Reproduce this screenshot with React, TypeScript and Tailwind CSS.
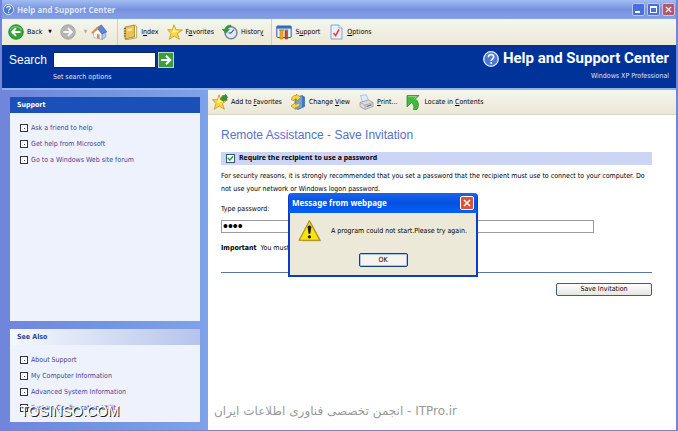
import { useState } from 'react'
import type { ReactNode } from 'react'

const supportLinks = ['Ask a friend to help', 'Get help from Microsoft', 'Go to a Windows Web site forum']
const seeAlsoLinks = ['About Support', 'My Computer Information', 'Advanced System Information', 'System Configuration Utility']

function HelpIcon({ className }: { className: string }) {
  return (
    <svg viewBox="0 0 16 16" className={className} aria-hidden="true">
      <circle cx="8" cy="8" r="7.3" fill="#4a78d6" stroke="#e8effd" strokeWidth="1.3" />
      <path d="M5.4 6.2C5.4 4.4 6.5 3.5 8.1 3.5s2.6.9 2.6 2.4c0 1.9-2.5 2-2.5 4" fill="none" stroke="#fff" strokeWidth="1.6" />
      <circle cx="8.2" cy="12" r="1" fill="#fff" />
    </svg>
  )
}

function BackIcon() {
  return (
    <svg viewBox="0 0 16 16" className="size-4" aria-hidden="true">
      <circle cx="8" cy="8" r="7.3" fill="#35a23a" stroke="#1f7f28" strokeWidth=".8" />
      <path d="M2.5 6C4 2 11 1 13.5 6" fill="none" stroke="#8fd68c" strokeWidth="1.4" opacity=".7" />
      <path d="M12.5 8H4.5M8 4.2L4.2 8L8 11.8" fill="none" stroke="#fff" strokeWidth="1.9" />
    </svg>
  )
}

function ForwardIcon() {
  return (
    <svg viewBox="0 0 16 16" className="size-4" aria-hidden="true">
      <circle cx="8" cy="8" r="7.2" fill="#b5b5b7" stroke="#9a9a9c" strokeWidth=".8" />
      <path d="M3.5 8h8M8 4.2L11.8 8L8 11.8" fill="none" stroke="#f4f4f4" strokeWidth="1.9" />
    </svg>
  )
}

function HomeIcon() {
  return (
    <svg viewBox="0 0 16 16" className="size-4" aria-hidden="true">
      <path d="M2 8.500L6.500 5l4.500 4.500V15.500L3 13.500z" fill="#fafbfe" stroke="#8b97b5" strokeWidth=".6" />
      <path d="M11 9.500L14.8 8V13L11 15.5z" fill="#b5c9ec" stroke="#7388b5" strokeWidth=".6" />
      <path d="M10.500 1L15.800 7.800L11 10L6 3.800z" fill="#5b87d6" stroke="#3962ae" strokeWidth=".6" />
      <path d="M10.500 1L6 3.200L.5 8.600L2 9.400L6.500 5.200L7 4z" fill="#eb9439" stroke="#c36c1e" strokeWidth=".4" />
      <path d="M6 10l2.600.6v4.200L6 14.100z" fill="#d98a3f" />
    </svg>
  )
}

function IndexIcon() {
  return (
    <svg viewBox="0 0 16 16" className="size-4" aria-hidden="true">
      <path d="M3 3L12.5 1v12L3 15z" fill="#e9c354" stroke="#9b7622" strokeWidth=".7" />
      <path d="M12.5 1L14.6 2.4v11.4L5 15.6L3 15l9.5-2z" fill="#fff6cc" stroke="#9b7622" strokeWidth=".6" />
      <path d="M5.5 5l4.5-1v2.6l-4.5 1z" fill="#f8e49b" />
      <path d="M1.8 4.5H4M1.8 7H4M1.8 9.5H4M1.8 12H4" stroke="#67553a" strokeWidth=".9" />
    </svg>
  )
}

function StarIcon({ plus }: { plus?: boolean }) {
  return (
    <svg viewBox="0 0 16 16" className="size-4" aria-hidden="true">
      <path d="M7 .8l2 5 6.4.2-5 3.6 2 5.7L7.3 12 2.2 15.3 4 9.6.6 5.7l4.8.1z" fill="#fcd83c" stroke="#c9941a" strokeWidth=".8" />
      <path d="M7 3l1.2 3.6 3.8.4-3.6 1.3L5 9l.8-2.2z" fill="#fff29a" />
      {plus && <path d="M10.5 1.5h2c.2-1.4 2.2-1.2 2 .3l1.2 1.4-.9 1.3c.6 1.3-.8 2.3-1.9 1.5L11.3 7.5 10 6c-1.6.2-2-1.6-.6-2.2z" fill="#35903a" stroke="#21692b" strokeWidth=".5" />}
    </svg>
  )
}

function HistoryIcon() {
  return (
    <svg viewBox="0 0 16 16" className="size-4" aria-hidden="true">
      <circle cx="9" cy="8.8" r="6" fill="#dfeaf5" stroke="#74869b" strokeWidth="1.5" />
      <path d="M9 9l3-3.5M9 9H6.5" stroke="#2a4c7c" strokeWidth="1.1" />
      <path d="M9 1.2C5.6.8 3.3 2.6 3 5.2H.3L4 9.3l3.4-4.1H5.3C5.6 3.4 7 2.4 9 2.6z" fill="#2e9e38" stroke="#1b7427" strokeWidth=".5" />
    </svg>
  )
}

function SupportIcon() {
  return (
    <svg viewBox="0 0 16 16" className="size-4" aria-hidden="true">
      <rect x=".8" y="2" width="14.4" height="11.5" rx="1" fill="#e9f1fc" stroke="#2f5fa8" />
      <path d="M.8 2h14.4v2.6H.8z" fill="#3569bb" />
      <path d="M4 6.5h3V15H4z" fill="#edae28" stroke="#9a6c15" strokeWidth=".5" />
      <path d="M9 6.5h2.6V15H9z" fill="#cf4334" stroke="#8d2820" strokeWidth=".5" />
      <path d="M3 6h5M8.4 6h4" stroke="#9c7a32" strokeWidth="1" />
    </svg>
  )
}

function OptionsIcon() {
  return (
    <svg viewBox="0 0 16 16" className="size-4" aria-hidden="true">
      <path d="M3 1h8l3 3v11H3z" fill="#e9f0fb" stroke="#7f9ac9" strokeWidth=".9" />
      <path d="M11 1v3h3" fill="#fff" stroke="#7f9ac9" strokeWidth=".7" />
      <path d="M5.5 9l2.2 2.6L11 5.5" fill="none" stroke="#d64b38" strokeWidth="1.6" />
    </svg>
  )
}

function ChangeViewIcon() {
  return (
    <svg viewBox="0 0 16 16" className="size-4" aria-hidden="true">
      <path d="M5 4l7-2.5 2.5 1.5v9.5L8 15.5 5 14z" fill="#6aa3e2" stroke="#2f62a8" strokeWidth=".7" />
      <path d="M12 1.5l2.5 1.5v9.5L12 13.5z" fill="#3f78c4" />
      <path d="M1.5 6C1.500 2.500 4 1 6.500 1.400V0L11 3.500 6.500 7V5C5 4.800 4.300 5.300 4 6.500z" fill="#fcd440" stroke="#a97d14" strokeWidth=".6" />
      <path d="M10 9.500c-.2 2.700-2 4-4.500 3.900V15.500L1 12 5.500 8.500v1.900c1 0 1.800-.3 2.200-1.200z" fill="#fcd440" stroke="#a97d14" strokeWidth=".6" />
    </svg>
  )
}

function PrintIcon() {
  return (
    <svg viewBox="0 0 16 16" className="size-4" aria-hidden="true">
      <path d="M2.5 1.5L8.5.8 10.5 7 4.5 8.5z" fill="#dceafd" stroke="#92a9cb" strokeWidth=".6" />
      <path d="M2 8.5L10.5 6l4.5 2.5v4L7 15.4 2 12.5z" fill="#dcdcdc" stroke="#8e8e90" strokeWidth=".7" />
      <path d="M2 8.5l5 2.6 8-2.6M7 11v4.3" fill="none" stroke="#9a9a9c" strokeWidth=".7" />
      <path d="M8.5 12.5l5-1.7" stroke="#5d6470" strokeWidth="1.2" />
    </svg>
  )
}

function LocateIcon() {
  return (
    <svg viewBox="0 0 16 16" className="size-4" aria-hidden="true">
      <path d="M2 1.5h12L10.500 5C13.500 7.500 14.500 11.500 12 15.500H8.500C9.500 12.500 8.500 10 6.500 8.500L2 13z" fill="#46b840" stroke="#248228" strokeWidth=".7" />
      <path d="M3 2.600h8.500L9 5.200" fill="none" stroke="#9be08c" strokeWidth=".8" />
    </svg>
  )
}

function WarningIcon() {
  return (
    <svg viewBox="0 0 22 22" className="size-6 shrink-0" aria-hidden="true">
      <path d="M12 3.5L21.5 20.5H4z" fill="#8b8874" opacity=".6" />
      <path d="M10.5 1.5L20 19.5H1z" fill="#fbe30f" stroke="#a98c0a" strokeWidth="1" strokeLinejoin="round" />
      <path d="M8.8 7.5c0-2 3.4-2 3.4 0L11.3 13.5H9.7z" fill="#1c1c1c" />
      <circle cx="10.5" cy="16.3" r="1.5" fill="#1c1c1c" />
    </svg>
  )
}

function ToolButton({ icon, className = '', children }: { icon: ReactNode; className?: string; children?: ReactNode }) {
  return (
    <button className={`flex items-center gap-[3px] whitespace-nowrap ${className}`}>
      {icon}
      {children && <span>{children}</span>}
    </button>
  )
}

function LinkList({ links }: { links: string[] }) {
  return (
    <ul className="px-2.5 pt-[7px]">
      {links.map(l => (
        <li key={l} className="h-4 leading-4">
          <a href="#" className="flex items-center gap-[3px] whitespace-nowrap text-[#4a4391]">
            <span className="flex size-2 shrink-0 items-center justify-center border border-[#303048] bg-white">
              <span className="size-px bg-[#303048]" />
            </span>
            {l}
          </a>
        </li>
      ))}
    </ul>
  )
}

export default function App() {
  const [required, setRequired] = useState(true)
  const [password, setPassword] = useState('pass')
  const [search, setSearch] = useState('')
  const [open, setOpen] = useState(true)

  return (
    <div className="relative flex min-h-screen flex-col border-x-2 border-b border-[#6f86dc] bg-white font-['DejaVu_Sans_Condensed','Noto_Sans',sans-serif] text-[7px] text-black">
      {/* Title bar */}
      <header className="flex h-[19px] items-center gap-[3px] bg-linear-to-b from-[#a3bdf2] via-[#7791e0] to-[#86a1e6] px-px">
        <HelpIcon className="size-[11px]" />
        <h1 className="flex-1 font-['Noto_Sans',sans-serif] text-[8px] font-bold text-[#dde6fa]">Help and Support Center</h1>
        <div className="flex gap-[2px]">
          <button aria-label="Minimize" className="flex size-[13px] items-end rounded-xs border border-[#b8c8f4] bg-[#4a6fdc] p-[2px]">
            <span className="h-[2px] w-[5px] bg-white" />
          </button>
          <button aria-label="Maximize" className="size-[13px] rounded-xs border border-[#b8c8f4] bg-[#4a6fdc] p-[2px]">
            <span className="block size-full border border-t-2 border-white" />
          </button>
          <button aria-label="Close" className="size-[13px] rounded-xs border border-[#d9c0d8] bg-[#b4586e] p-[2px]">
            <svg viewBox="0 0 8 8" className="size-full"><path d="M1 1l6 6M7 1L1 7" stroke="#fff" strokeWidth="1.5" /></svg>
          </button>
        </div>
      </header>

      {/* Navigation toolbar */}
      <nav className="flex h-[26px] items-center bg-linear-to-b from-[#f6f5ee] to-[#ebe8d7] px-1.5">
        <ToolButton icon={<BackIcon />}>Back</ToolButton>
        <span className="ml-1.5 text-[5px]">▼</span>
        <ToolButton icon={<ForwardIcon />} className="ml-2" />
        <span className="ml-2 text-[5px] text-[#aaa]">▼</span>
        <ToolButton icon={<HomeIcon />} className="ml-1" />
        <span className="ml-2.5 h-full border-l border-[#d0cdbd]" />
        <ToolButton icon={<IndexIcon />} className="ml-1">I<u>n</u>dex</ToolButton>
        <ToolButton icon={<StarIcon />} className="ml-2">F<u>a</u>vorites</ToolButton>
        <ToolButton icon={<HistoryIcon />} className="ml-2">Histor<u>y</u></ToolButton>
        <span className="ml-2 h-full border-l border-[#d0cdbd]" />
        <ToolButton icon={<SupportIcon />} className="ml-1">S<u>u</u>pport</ToolButton>
        <ToolButton icon={<OptionsIcon />} className="ml-2"><u>O</u>ptions</ToolButton>
      </nav>

      {/* Search banner */}
      <div className="flex h-[43px] justify-between bg-[#003399] px-[7px] text-white">
        <form className="flex gap-1.5 pt-[7px]" onSubmit={e => e.preventDefault()}>
          <label htmlFor="search" className="font-['Liberation_Sans',sans-serif] text-[12px] leading-[17px]">Search</label>
          <div>
            <div className="flex items-center gap-[2px]">
              <input id="search" value={search} onChange={e => setSearch(e.target.value)} className="h-4 w-[103px] border border-[#12245c] bg-white px-1 text-black" />
              <button aria-label="Go" className="size-4 border border-[#b9dcb5] bg-[#3c9d40]">
                <svg viewBox="0 0 14 14" className="size-full"><path d="M2 7h9M7 2.8L11.2 7L7 11.2" fill="none" stroke="#fff" strokeWidth="2" /></svg>
              </button>
            </div>
            <a href="#" className="block pt-[2px] leading-[14px] text-[#dfe6f7]">Set search options</a>
          </div>
        </form>
        <div className="pt-1 text-right">
          <div className="flex items-center gap-1 font-['Roboto','Liberation_Sans',sans-serif] text-[15px] leading-[19px] font-bold">
            <HelpIcon className="size-4" />
            Help and Support Center
          </div>
          <p className="leading-4 text-[#dfe6f7]">Windows XP Professional</p>
        </div>
      </div>

      <div className="flex flex-1 border-t-2 border-[#8fb0ee]">
        {/* Sidebar */}
        <aside className="flex w-[206px] shrink-0 flex-col gap-2 bg-linear-to-r from-[#7085dc] via-[#7395e0] to-[#7fa3ea] px-2 pt-[7px] pb-2">
          <section className="flex-1 bg-[#eef2fd]">
            <h2 className="h-4 bg-[#1c50b9] px-[7px] leading-4 font-bold text-white">Support</h2>
            <LinkList links={supportLinks} />
          </section>
          <section className="h-[93px] bg-[#eef2fd]">
            <h2 className="h-4 bg-linear-to-r from-[#f6f8fe] to-[#b5c4ea] px-[7px] leading-4 font-bold text-[#1f4a94]">See Also</h2>
            <LinkList links={seeAlsoLinks} />
          </section>
        </aside>

        <main className="min-w-0 flex-1">
          <div className="flex h-[25px] items-center border-b border-[#d8d5c4] bg-linear-to-b from-[#f6f5ee] to-[#ebe8d7] px-1">
            <ToolButton icon={<StarIcon plus />}>Add to <u>F</u>avorites</ToolButton>
            <ToolButton icon={<ChangeViewIcon />} className="ml-2">Change <u>V</u>iew</ToolButton>
            <ToolButton icon={<PrintIcon />} className="ml-2"><u>P</u>rint...</ToolButton>
            <ToolButton icon={<LocateIcon />} className="ml-2">Locate in <u>C</u>ontents</ToolButton>
          </div>

          <div className="pt-3 pr-6 pl-[13px]">
            <h2 className="font-['Liberation_Sans',sans-serif] text-[12px] leading-4 text-[#5672c4]">Remote Assistance - Save Invitation</h2>
            <label className="mt-[9px] flex h-[13px] items-center gap-1 bg-[#ccd5f5] px-[5px] font-['Noto_Sans',sans-serif] font-bold">
              <input type="checkbox" checked={required} onChange={e => setRequired(e.target.checked)} className="peer sr-only" />
              <span className="flex size-[9px] border border-[#33557f] bg-white text-transparent peer-checked:text-[#21a121]">
                <svg viewBox="0 0 8 8" className="size-full"><path d="M1 3.5L3.2 6L7 1.5" fill="none" stroke="currentColor" strokeWidth="1.6" /></svg>
              </span>
              Require the recipient to use a password
            </label>
            <p className="mt-[5px] leading-[13px]">
              For security reasons, it is strongly recommended that you set a password that the recipient must use to connect to your computer. Do not use your network or Windows logon password.
            </p>
            <label htmlFor="password" className="mt-[7px] block leading-[13px]">Type password:</label>
            <input id="password" type="password" value={password} onChange={e => setPassword(e.target.value)} className="mt-1 block h-[13px] w-[373px] border border-[#9a9aa2] bg-white px-px font-['Liberation_Sans',sans-serif] text-[14px]" />
            <p className="mt-[9px] leading-[13px]"><b>Important</b>&nbsp; You must provide the password to the recipient.</p>
            <hr className="mt-[17px] border-[#5a75a8]" />
            <div className="mt-2.5 flex justify-end">
              <button className="h-[13px] w-24 rounded-xs border border-[#455a78] bg-linear-to-b from-white to-[#e6e6df] leading-[11px]">Save Invitation</button>
            </div>
          </div>
        </main>
      </div>

      {open && (
        <div role="alertdialog" aria-label="Message from webpage" className="absolute top-[193px] left-[286px] w-[190px] rounded-t-[4px] border-2 border-t-0 border-[#0a3cc8] bg-[#ece9d8]">
          <div className="-mx-px flex h-5 items-center justify-between rounded-t-[4px] bg-linear-to-b from-[#1c62ee] via-[#0450e0] to-[#0560f8] px-[3px] font-bold text-white">
            <span className="font-['Noto_Sans',sans-serif] text-[8px]">Message from webpage</span>
            <button aria-label="Close" onClick={() => setOpen(false)} className="size-[14px] rounded-xs border border-white bg-[#e0512f] p-[2px]">
              <svg viewBox="0 0 8 8" className="size-full"><path d="M1 1l6 6M7 1L1 7" stroke="#fff" strokeWidth="1.5" /></svg>
            </button>
          </div>
          <div className="flex h-9 items-center gap-[9px] px-2">
            <WarningIcon />
            <p className="whitespace-nowrap">A program could not start.Please try again.</p>
          </div>
          <div className="flex h-[26px] items-start justify-center pt-1">
            <button onClick={() => setOpen(false)} className="h-[14px] w-[49px] rounded-xs border border-[#16407c] bg-[#f5f4ee] leading-3 ring-1 ring-[#a9c3ef] ring-inset">OK</button>
          </div>
        </div>
      )}

      {/* Watermarks */}
      <p className="pointer-events-none absolute bottom-[11px] left-[18px] font-['Liberation_Sans',sans-serif] text-[14px] leading-4 text-white [text-shadow:1px_1px_0_#222]">TOSINSO.COM</p>
      <p dir="rtl" className="pointer-events-none absolute bottom-[11px] left-[212px] font-['DejaVu_Sans',sans-serif] text-[12px] leading-4 whitespace-nowrap text-[#999]">
        <bdi>ITPro.ir</bdi> - انجمن تخصصی فناوری اطلاعات ایران
      </p>
    </div>
  )
}
